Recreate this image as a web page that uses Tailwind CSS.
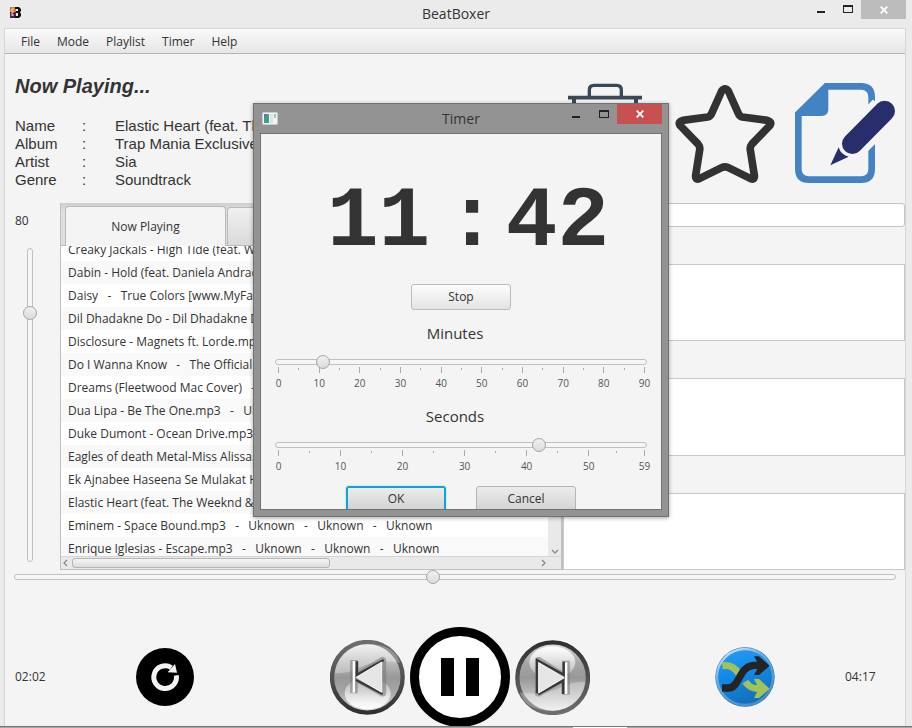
<!DOCTYPE html>
<html lang="en">
<head>
<meta charset="utf-8">
<meta name="viewport" content="width=device-width, initial-scale=1">
<title>BeatBoxer</title>
<script src="https://cdn.jsdelivr.net/npm/@tailwindcss/browser@4"></script>
</head>
<body class="bg-[#ebebeb] font-['Open_Sans',sans-serif] text-xs text-[#333]">
<div class="relative flex min-h-screen flex-col overflow-hidden">

  <header class="relative flex h-7 shrink-0 items-center justify-center">
    <svg class="absolute left-[10px] top-[7px] h-[11px] w-[11px]" viewBox="0 0 11 11" aria-hidden="true">
      <rect width="6" height="5" fill="#e07a1f"/><rect y="5" width="6" height="6" fill="#4b2350"/>
      <path d="M2 2h2M2 5h2M2 8h2M2 2v7" stroke="#f3d9c4" fill="none"/>
      <path d="M5 0h4l2 2v2L10 5l1 2v2l-2 2H5V9h3V6H6V4h2V2H5z" fill="#111"/>
    </svg>
    <h1 class="text-sm">BeatBoxer</h1>
    <div class="absolute right-[6px] top-0 flex h-[19px]">
      <button aria-label="Minimize" class="flex w-[26px] items-center justify-center"><svg class="h-[19px] w-[26px]" viewBox="0 0 26 19"><path d="M8 11h8v2H8z" fill="#222"/></svg></button>
      <button aria-label="Maximize" class="w-[26px]"><svg class="h-[19px] w-[26px]" viewBox="0 0 26 19"><path d="M8 5h10v8H8zM9 7v5h8V7z" fill="#222" fill-rule="evenodd"/></svg></button>
      <button aria-label="Close" class="flex w-[45px] items-center justify-center bg-[#bcbcbc]"><svg class="h-[8px] w-[8px]" viewBox="0 0 8 8"><path d="M.7.7l6.6 6.6M7.3.7L.7 7.3" stroke="#fff" stroke-width="1.7"/></svg></button>
    </div>
  </header>

  <div class="mr-[6px] ml-1 flex flex-1 flex-col border border-b-0 border-[#d6d6d6] bg-[#f4f4f4]">
    <nav class="flex h-[25px] shrink-0 items-center gap-[17px] border-b border-[#b5b5b5] bg-linear-to-b from-[#fafafa] to-[#e6e6e6] px-4 pt-[2px]">
      <button>File</button><button>Mode</button><button>Playlist</button><button>Timer</button><button>Help</button>
    </nav>

    <section class="flex justify-between px-[10px] pb-[14px] font-['Liberation_Sans',Arial,sans-serif]">
      <div class="pt-5">
        <h2 class="text-xl leading-6 font-bold italic">Now Playing...</h2>
        <dl class="mt-[19px] grid grid-cols-[100px_auto] text-[15px] leading-[18px]">
          <dt class="flex"><span class="w-[67px]">Name</span>:</dt><dd>Elastic Heart (feat. The Weeknd)</dd>
          <dt class="flex"><span class="w-[67px]">Album</span>:</dt><dd>Trap Mania Exclusive</dd>
          <dt class="flex"><span class="w-[67px]">Artist</span>:</dt><dd>Sia</dd>
          <dt class="flex"><span class="w-[67px]">Genre</span>:</dt><dd>Soundtrack</dd>
        </dl>
      </div>
      <div class="flex gap-5 pt-[29px]">
        <button aria-label="Delete" class="h-[100px] w-[100px]">
          <svg viewBox="-15 39 300 300" class="h-full w-full"><g fill="none" stroke="#3b4856"><path d="M88 80V60Q88 46 102 46H170Q184 46 184 60V80" stroke-width="10"/><path d="M24 83H246" stroke-width="11"/><path d="M42 86V320Q42 333 55 333H215Q228 333 228 320V86" stroke-width="12"/></g></svg>
        </button>
        <button aria-label="Favourite" class="h-[100px] w-[100px]">
          <svg viewBox="345 39 300 300" class="h-full w-full"><path d="M485 63Q495 50 505 63L535 130Q538 139 547 141L622 151Q637 155 630 166L576 222Q569 230 571 240L583 316Q585 331 572 326L505 293Q495 288 485 293L418 326Q405 331 407 316L419 240Q421 230 414 222L360 166Q353 155 368 151L443 141Q452 139 455 130Z" fill="none" stroke="#323232" stroke-width="23" stroke-linejoin="round"/></svg>
        </button>
        <button aria-label="Edit" class="h-[100px] w-[100px]">
          <svg viewBox="705 39 300 300" class="h-full w-full">
            <path d="M935 120V82Q935 49 903 49H799L715 132V297Q715 329 747 329H903Q935 329 935 297V200" fill="none" stroke="#4383c4" stroke-width="20"/>
            <path d="M705 131L796 39L805 55V118Q805 138 785 138H712Z" fill="#4383c4"/>
            <path d="M877 221L974 123" stroke="#f4f4f4" stroke-width="98"/>
            <path d="M877 221L974 123" stroke="#282d6b" stroke-width="62" stroke-linecap="round"/>
            <path d="M811 286L836 232Q842 254 866 260Z" fill="#282d6b"/>
          </svg>
        </button>
      </div>
    </section>

    <section class="flex h-[367px] shrink-0">
      <div class="flex w-[55px] shrink-0 flex-col">
        <label for="vol" class="mt-2 ml-[10px] leading-5">80</label>
        <div class="relative mt-[17px] ml-[22px] h-[314px] w-[6px] rounded-full border border-[#c0c0c0] bg-[#f6f6f6]">
          <input id="vol" type="range" min="0" max="100" value="80" class="absolute -top-1 -left-[5px] h-[320px] w-[14px] appearance-none bg-transparent [direction:rtl] [writing-mode:vertical-lr] [&::-webkit-slider-thumb]:h-[14px] [&::-webkit-slider-thumb]:w-[14px] [&::-webkit-slider-thumb]:appearance-none [&::-webkit-slider-thumb]:rounded-full [&::-webkit-slider-thumb]:border [&::-webkit-slider-thumb]:border-[#a5a5a5] [&::-webkit-slider-thumb]:bg-linear-to-b [&::-webkit-slider-thumb]:from-[#f0f0f0] [&::-webkit-slider-thumb]:to-[#dcdcdc]">
        </div>
      </div>

      <div class="flex min-w-0 flex-[502] flex-col border-r-2 border-b border-l border-[#c0c0c0] bg-white">
        <div class="flex h-[43px] shrink-0 items-end border-b border-[#bababa] bg-linear-to-b from-[#cfcfcf] to-[#dedede] to-20% pl-1">
          <button class="-mb-px h-10 w-[161px] rounded-t border border-b-0 border-[#bababa] bg-[#f4f4f4]">Now Playing</button>
          <button aria-label="Playlist tab" class="ml-px h-[38px] w-[161px] rounded-t border border-b-0 border-[#bababa] bg-linear-to-b from-[#f0f0f0] to-[#dadada]"></button>
        </div>
        <div class="flex min-h-0 flex-1">
          <div class="min-w-0 flex-1 overflow-hidden">
            <ul class="-mt-2 leading-[23px] [&>li]:pl-[7px] [&>li]:whitespace-pre [&>li:nth-child(even)]:bg-[#f9f9f9]">
              <li>Creaky Jackals - High Tide (feat. WILD)</li>
              <li>Dabin - Hold (feat. Daniela Andrade)</li>
              <li>Daisy   -   True Colors [www.MyFaza.com]</li>
              <li>Dil Dhadakne Do - Dil Dhadakne Do</li>
              <li>Disclosure - Magnets ft. Lorde.mp3</li>
              <li>Do I Wanna Know   -   The Official Uknown</li>
              <li>Dreams (Fleetwood Mac Cover)   -   Uknown</li>
              <li>Dua Lipa - Be The One.mp3   -   Uknown</li>
              <li>Duke Dumont - Ocean Drive.mp3</li>
              <li>Eagles of death Metal-Miss Alissa.mp3</li>
              <li>Ek Ajnabee Haseena Se Mulakat Ho Gayi</li>
              <li>Elastic Heart (feat. The Weeknd &amp; Diplo)</li>
              <li>Eminem - Space Bound.mp3   -   Uknown   -   Uknown   -   Uknown</li>
              <li>Enrique Iglesias - Escape.mp3   -   Uknown   -   Uknown   -   Uknown</li>
            </ul>
          </div>
          <div class="flex w-[13px] flex-col justify-end bg-[#e9e9e9]">
            <svg class="mx-auto h-2 w-2" viewBox="0 0 8 8"><path d="M1 2l3 3 3-3" fill="none" stroke="#888" stroke-width="1.3"/></svg>
          </div>
        </div>
        <div class="flex h-[13px] shrink-0 items-center border-t border-[#d5d5d5] bg-[#e9e9e9] pr-[13px] pl-px">
          <svg class="h-2 w-2" viewBox="0 0 8 8"><path d="M5 1L2 4l3 3" fill="none" stroke="#888" stroke-width="1.3"/></svg>
          <div class="ml-[2px] h-[10px] w-[258px] rounded-[3px] border border-[#b5b5b5] bg-linear-to-b from-[#f5f5f5] to-[#dcdcdc]"></div>
          <svg class="ml-auto h-2 w-2" viewBox="0 0 8 8"><path d="M2 1l3 3-3 3" fill="none" stroke="#888" stroke-width="1.3"/></svg>
        </div>
      </div>

      <div class="flex min-w-0 flex-[343] flex-col gap-[37px]">
        <input type="text" aria-label="Search" class="h-6 w-full shrink-0 rounded-[3px] border border-[#c4c4c4] bg-white px-2">
        <textarea aria-label="Lyrics" class="min-h-0 w-full flex-1 resize-none border border-[#c8c8c8] bg-white"></textarea>
        <textarea aria-label="Notes" class="min-h-0 w-full flex-1 resize-none border border-[#c8c8c8] bg-white"></textarea>
        <textarea aria-label="Comments" class="min-h-0 w-full flex-1 resize-none border border-[#c8c8c8] bg-white"></textarea>
      </div>
    </section>

    <input type="range" aria-label="Position" min="0" max="257" value="122" class="mx-[9px] h-[14px] shrink-0 appearance-none bg-transparent [&::-webkit-slider-runnable-track]:h-[6px] [&::-webkit-slider-runnable-track]:rounded-full [&::-webkit-slider-runnable-track]:border [&::-webkit-slider-runnable-track]:border-[#c0c0c0] [&::-webkit-slider-runnable-track]:bg-[#f6f6f6] [&::-webkit-slider-thumb]:-mt-[5px] [&::-webkit-slider-thumb]:h-[14px] [&::-webkit-slider-thumb]:w-[14px] [&::-webkit-slider-thumb]:appearance-none [&::-webkit-slider-thumb]:rounded-full [&::-webkit-slider-thumb]:border [&::-webkit-slider-thumb]:border-[#a5a5a5] [&::-webkit-slider-thumb]:bg-linear-to-b [&::-webkit-slider-thumb]:from-[#f0f0f0] [&::-webkit-slider-thumb]:to-[#dcdcdc]">

    <footer class="mt-auto -mb-px grid grid-cols-[121fr_194fr_385fr_130fr_60fr] items-center pl-[10px]">
      <span>02:02</span>
      <button aria-label="Repeat" class="h-[58px] w-[58px]">
        <svg viewBox="408 414 174 174" class="h-full w-full"><circle cx="495" cy="501" r="87"/><path d="M529 496A34 34 0 1 1 514 473" fill="none" stroke="#f4f4f4" stroke-width="15"/><path d="M525 462L531 488L503 487Z" fill="#f4f4f4"/></svg>
      </button>
      <div class="flex items-center gap-[5px]">
        <button aria-label="Previous" class="h-[75px] w-[75px]">
          <svg viewBox="30 90 225 225" class="h-full w-full">
            <defs>
              <linearGradient id="ring" x1="0" y1="0" x2="0" y2="1"><stop offset="0" stop-color="#6d6d6d"/><stop offset=".5" stop-color="#505050"/><stop offset="1" stop-color="#303030"/></linearGradient>
              <linearGradient id="face" x1="0" y1="0" x2="0" y2="1"><stop offset="0" stop-color="#f2f2f2"/><stop offset=".32" stop-color="#b5b5b5"/><stop offset=".5" stop-color="#989898"/><stop offset=".72" stop-color="#a8a8a8"/><stop offset="1" stop-color="#e0e0e0"/></linearGradient>
              <linearGradient id="shine" x1="0" y1="0" x2="0" y2="1"><stop offset="0" stop-color="#fff" stop-opacity=".2"/><stop offset="1" stop-color="#fff" stop-opacity=".95"/></linearGradient>
            </defs>
            <circle cx="142" cy="202" r="106" fill="url(#face)" stroke="url(#ring)" stroke-width="13"/>
            <path d="M45 190Q90 190 120 172Q170 146 240 158Q225 103 142 101Q55 110 45 190Z" fill="#fff" fill-opacity=".3"/>
            <ellipse cx="143" cy="250" rx="69" ry="48" fill="url(#shine)"/>
            <path d="M102 150V250M187 152V248L108 202Z" fill="none" stroke="#777" stroke-opacity=".55" stroke-width="23" stroke-linejoin="round"/>
            <path d="M191 150L111 194V154M108 210L188 252" fill="none" stroke="#383838" stroke-width="7"/>
            <path d="M185 156V247L109 202Z" fill="#e6e6e6" stroke="#f5f5f5" stroke-width="3"/>
            <path d="M98 153H105V248H98Z" fill="#fff"/>
          </svg>
        </button>
        <button aria-label="Pause" class="h-[100px] w-[100px]">
          <svg viewBox="0 0 100 100" class="h-full w-full"><circle cx="50" cy="50" r="45.500" fill="#fff" stroke="#000" stroke-width="9"/><path d="M31 31h13v38H31zM56 31h13v38H56z"/></svg>
        </button>
        <button aria-label="Next" class="h-[75px] w-[75px]">
          <svg viewBox="585 90 225 225" class="h-full w-full">
            <g transform="rotate(180 697.5 202.500)"><circle cx="697" cy="202" r="106" fill="url(#face)" stroke="url(#ring)" stroke-width="13"/>
            <path d="M600 190Q645 190 675 172Q725 146 795 158Q780 103 697 101Q610 110 600 190Z" fill="#fff" fill-opacity=".3"/>
            <ellipse cx="698" cy="248" rx="69" ry="48" fill="url(#shine)"/></g>
            <path d="M738 152V254M656 152V248L733 202Z" fill="none" stroke="#777" stroke-opacity=".55" stroke-width="23" stroke-linejoin="round"/>
            <path d="M651 250V150L731 194V155M655 253L729 212V252" fill="none" stroke="#383838" stroke-width="7"/>
            <path d="M656 158V249L732 203Z" fill="#e6e6e6" stroke="#f5f5f5" stroke-width="3"/>
            <path d="M735 157H742V252H735Z" fill="#fff"/>
          </svg>
        </button>
      </div>
      <button aria-label="Shuffle" class="h-[60px] w-[60px]">
        <svg viewBox="75 51 180 180" class="h-full w-full">
          <defs><linearGradient id="blue" x1="0" y1="0" x2=".3" y2="1"><stop offset="0" stop-color="#2a9df5"/><stop offset=".5" stop-color="#128ae8"/><stop offset="1" stop-color="#1272bd"/></linearGradient>
          <linearGradient id="rim" x1="0" y1="0" x2=".6" y2="1"><stop offset="0" stop-color="#e8f4ff"/><stop offset=".4" stop-color="#69b2ea"/><stop offset="1" stop-color="#4d8fc9"/></linearGradient></defs>
          <circle cx="165" cy="141" r="89" fill="#34689c"/><circle cx="165" cy="141" r="84" fill="url(#blue)" stroke="url(#rim)" stroke-width="7"/>
          <path d="M97 107C125 104 136 116 148 133M166 155C176 170 186 176 206 176" fill="none" stroke="#a2c25a" stroke-width="21"/>
          <path d="M192 147H207L239 176L207 204H192L201 187V165Z" fill="#a2c25a"/>
          <path d="M96 174H116C150 174 145 108 192 106H212" fill="none" stroke="#242424" stroke-width="22"/>
          <path d="M192 79H207L239 107L207 135H192L202 117V96Z" fill="#242424"/>
        </svg>
      </button>
      <span>04:17</span>
    </footer>
  </div>
  <div class="flex h-[2px] shrink-0 border-t border-[#777] bg-[#a5a5a5] pl-[573px]"><span class="w-[54px] bg-white"></span></div>

  <div role="dialog" aria-labelledby="dlg" class="absolute top-[103px] left-[253px] flex h-[414px] w-[416px] flex-col border border-[#727272] bg-[#939393] px-[6px] pb-[6px] shadow-[0_1px_4px_rgba(0,0,0,0.35)]">
    <div class="relative flex h-[29px] shrink-0 items-center justify-center">
      <svg class="absolute top-2 left-[2px] h-[13px] w-4" viewBox="0 0 16 13" aria-hidden="true"><rect x=".5" y=".5" width="15" height="12" rx="1" fill="#f2f5f5" stroke="#c6cccc"/><path d="M2 2h5v9H2z" fill="#4a9a8c"/><path d="M2 2h3l-3 5z" fill="#4d7fb0"/><path d="M8 2h3v9H8z" fill="#dfe3e3"/><path d="M12 2h2v4h-2z" fill="#9cc7b8"/></svg>
      <h2 id="dlg" class="text-sm">Timer</h2>
      <div class="absolute top-0 right-0 flex h-5">
        <button aria-label="Minimize timer"><svg class="h-5 w-[26px]" viewBox="0 0 26 20"><path d="M7 12h8v2H7z" fill="#222"/></svg></button>
        <button aria-label="Maximize timer"><svg class="h-5 w-[26px]" viewBox="0 0 26 20"><path d="M8 6h10v8H8zM9 8v5h8V8z" fill="#222" fill-rule="evenodd"/></svg></button>
        <button aria-label="Close timer" class="flex w-[45px] items-center justify-center bg-[#c75050]"><svg class="h-2 w-2" viewBox="0 0 8 8"><path d="M.7.7l6.6 6.6M7.3.7L.7 7.3" stroke="#fff" stroke-width="1.7"/></svg></button>
      </div>
    </div>
    <div class="min-h-0 flex-1 overflow-hidden border border-[#727272] bg-[#f4f4f4]">
      <div class="flex justify-center pt-10 pl-[14px] font-['Liberation_Mono',monospace] text-[86px] leading-[96px] font-bold">
        <span class="mr-4">11</span><span class="mr-2">:</span><span>42</span>
      </div>
      <button class="mx-auto mt-[14px] block h-[26px] w-[100px] rounded-[3px] border border-[#bbb] bg-linear-to-b from-[#fdfdfd] to-[#e3e3e3]">Stop</button>
      <label for="min" class="mt-3 block pr-3 text-center text-[15px] leading-[22px]">Minutes</label>
      <div class="relative mx-[14px] mt-[15px] mb-1 h-[6px] rounded-full border border-[#c0c0c0] bg-[#f6f6f6]">
        <input id="min" type="range" min="0" max="90" value="11" class="absolute -top-[5px] -left-[5px] block h-[14px] w-[380px] appearance-none bg-transparent [&::-webkit-slider-thumb]:h-[14px] [&::-webkit-slider-thumb]:w-[14px] [&::-webkit-slider-thumb]:appearance-none [&::-webkit-slider-thumb]:rounded-full [&::-webkit-slider-thumb]:border [&::-webkit-slider-thumb]:border-[#a5a5a5] [&::-webkit-slider-thumb]:bg-linear-to-b [&::-webkit-slider-thumb]:from-[#f0f0f0] [&::-webkit-slider-thumb]:to-[#dcdcdc]">
      </div>
      <div class="mr-4 ml-[17px] -mt-[2px] grid h-[6px] grid-cols-[repeat(9,1fr)_1px] [&>i]:flex [&>i]:justify-center [&>i]:border-l [&>i]:border-[#aaa] [&>i>b]:mt-px [&>i>b]:h-[2px] [&>i>b]:w-px [&>i>b]:bg-[#aaa]">
        <i><b></b></i><i><b></b></i><i><b></b></i><i><b></b></i><i><b></b></i><i><b></b></i><i><b></b></i><i><b></b></i><i><b></b></i><i></i>
      </div>
      <div class="mr-4 ml-[17px] mt-[2px] grid grid-cols-[repeat(9,1fr)_1px] text-[10px] leading-[16px] text-[#555] [&>span]:flex [&>span]:w-px [&>span]:justify-center">
        <span>0</span><span>10</span><span>20</span><span>30</span><span>40</span><span>50</span><span>60</span><span>70</span><span>80</span><span>90</span>
      </div>
      <label for="sec" class="mt-[14px] block pr-3 text-center text-[15px] leading-[22px]">Seconds</label>
      <div class="relative mx-[14px] mt-[15px] mb-1 h-[6px] rounded-full border border-[#c0c0c0] bg-[#f6f6f6]">
        <input id="sec" type="range" min="0" max="59" value="42" class="absolute -top-[5px] -left-[5px] block h-[14px] w-[380px] appearance-none bg-transparent [&::-webkit-slider-thumb]:h-[14px] [&::-webkit-slider-thumb]:w-[14px] [&::-webkit-slider-thumb]:appearance-none [&::-webkit-slider-thumb]:rounded-full [&::-webkit-slider-thumb]:border [&::-webkit-slider-thumb]:border-[#a5a5a5] [&::-webkit-slider-thumb]:bg-linear-to-b [&::-webkit-slider-thumb]:from-[#f0f0f0] [&::-webkit-slider-thumb]:to-[#dcdcdc]">
      </div>
      <div class="mr-4 ml-[17px] -mt-[2px] grid h-[6px] grid-cols-[repeat(5,10fr)_9fr_1px] [&>i]:flex [&>i]:justify-center [&>i]:border-l [&>i]:border-[#aaa] [&>i>b]:mt-px [&>i>b]:h-[2px] [&>i>b]:w-px [&>i>b]:bg-[#aaa]">
        <i><b></b></i><i><b></b></i><i><b></b></i><i><b></b></i><i><b></b></i><i><b></b></i><i></i>
      </div>
      <div class="mr-4 ml-[17px] mt-[2px] grid grid-cols-[repeat(5,10fr)_9fr_1px] text-[10px] leading-[16px] text-[#555] [&>span]:flex [&>span]:w-px [&>span]:justify-center">
        <span>0</span><span>10</span><span>20</span><span>30</span><span>40</span><span>50</span><span>59</span>
      </div>
      <div class="mt-3 flex justify-center gap-[30px]">
        <button class="h-[26px] w-[100px] rounded-[3px] border-2 border-[#12a3d4] bg-linear-to-b from-[#ececec] to-[#d2d2d2] shadow-[0_0_2px_#7fd0ec]">OK</button>
        <button class="h-[26px] w-[100px] rounded-[3px] border border-[#b5b5b5] bg-linear-to-b from-[#ececec] to-[#d2d2d2]">Cancel</button>
      </div>
    </div>
  </div>
</div>
</body>
</html>
